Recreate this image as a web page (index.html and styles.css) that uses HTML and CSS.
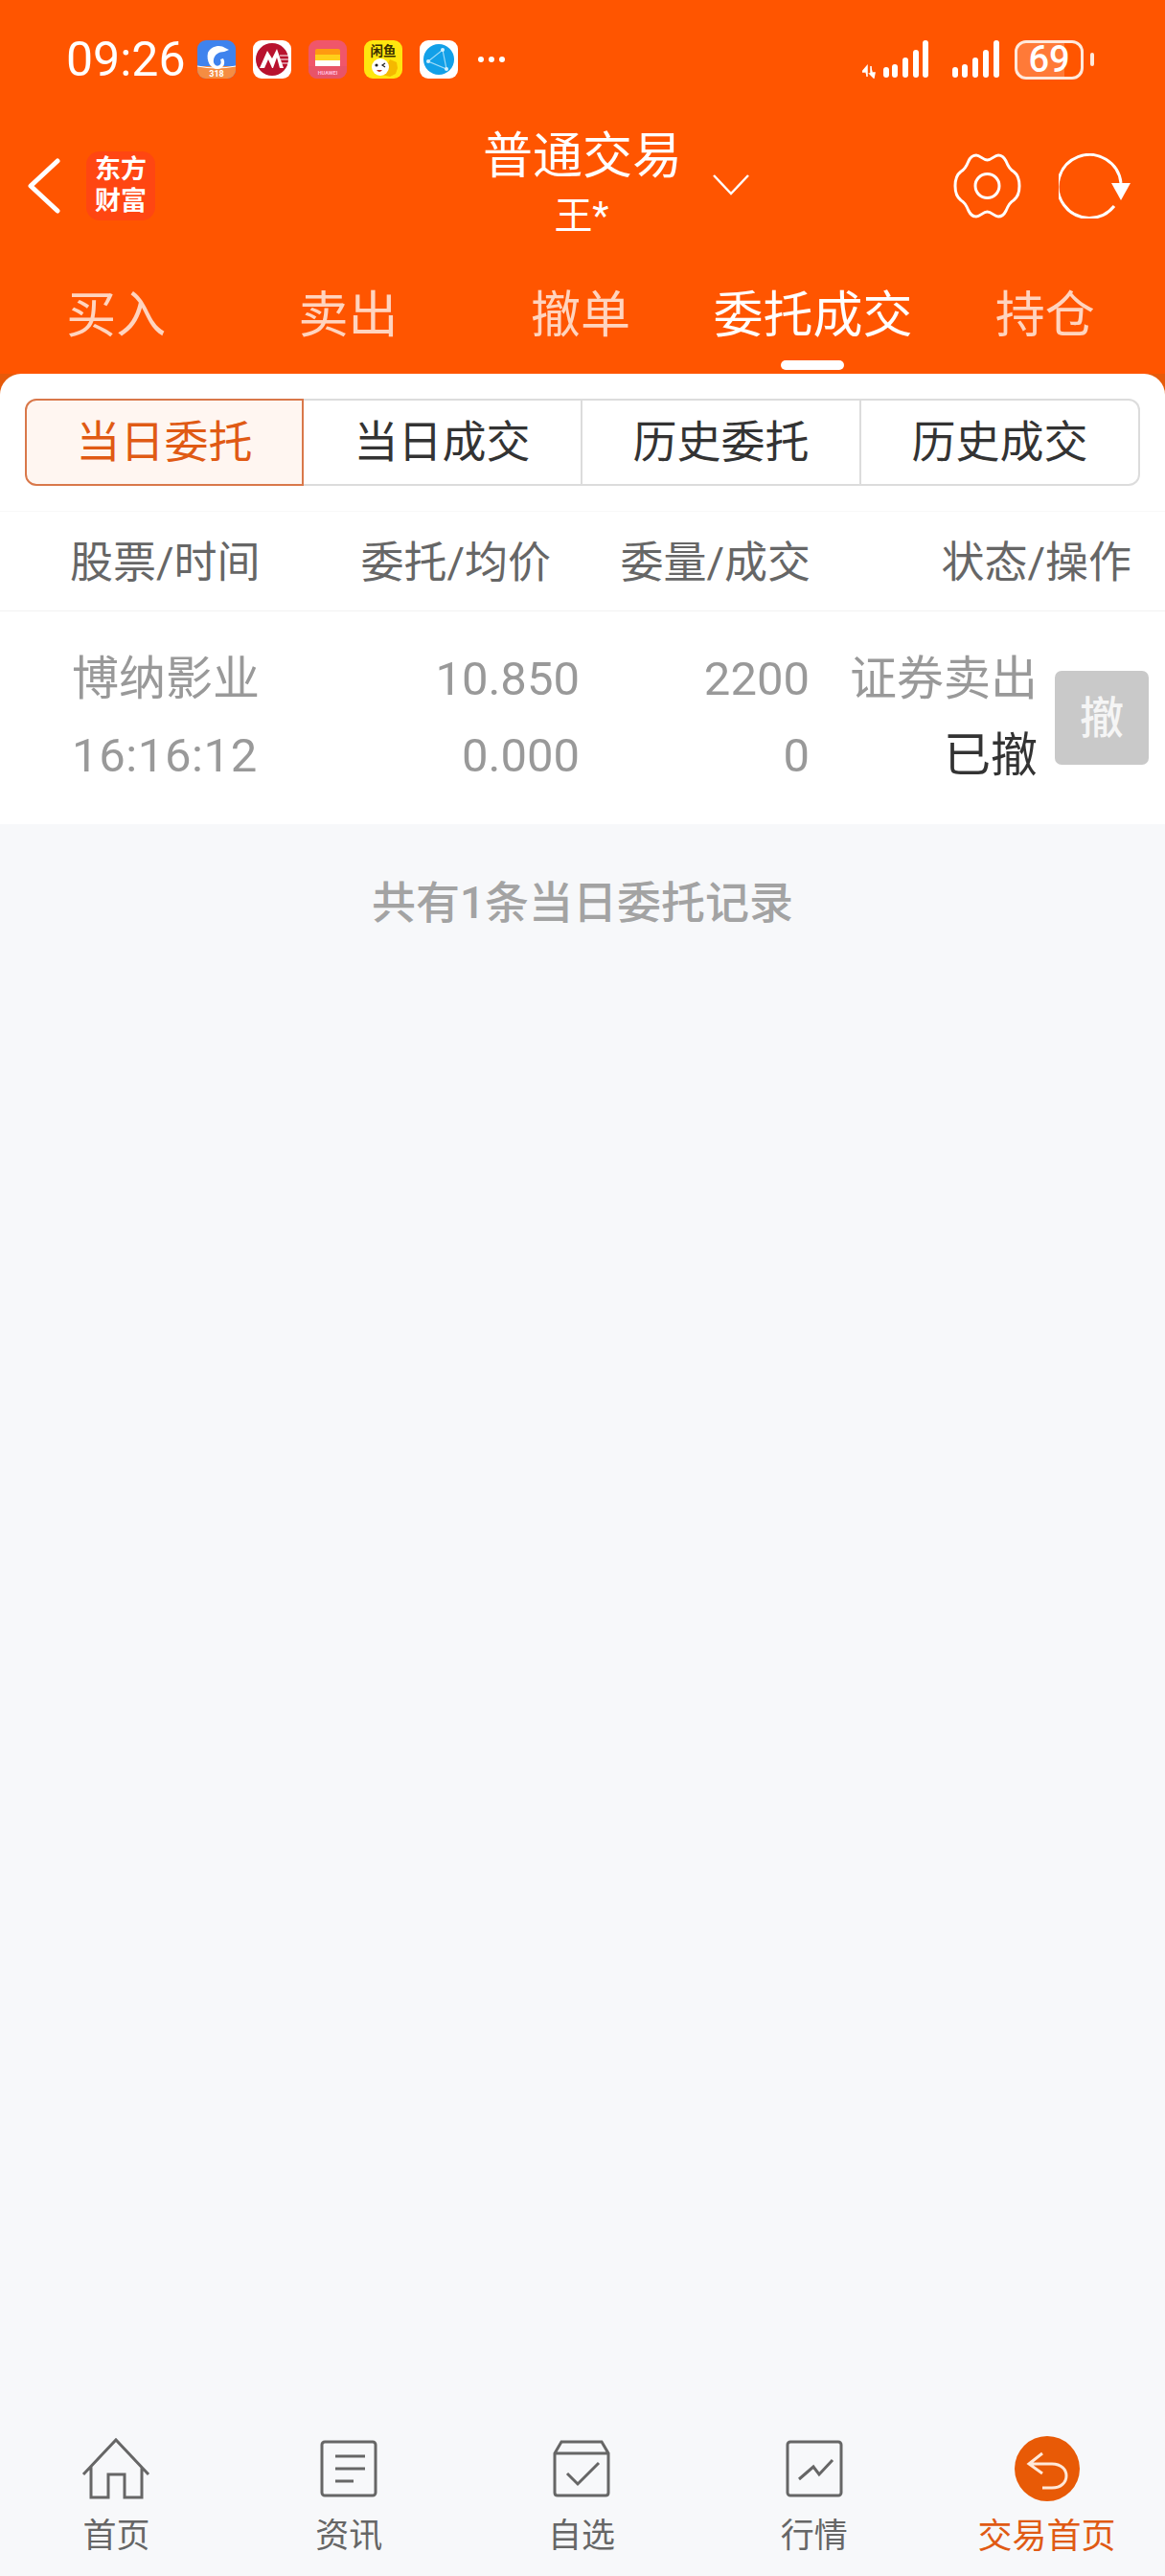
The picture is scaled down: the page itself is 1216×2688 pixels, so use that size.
FILE: index.html
```html
<!DOCTYPE html>
<html>
<head>
    <meta charset="utf-8">
    <link rel="stylesheet" href="styles.css">
</head>
<body>
<div class="page">
    <div class="header">
        <div class="statusBar">
            <span class="clock">09:26</span>
            <div class="appIcons">
                <svg class="appIcon" viewBox="0 0 40 40">
                    <defs><clipPath id="clip1"><rect width="40" height="40" rx="9"/></clipPath></defs>
                    <g clip-path="url(#clip1)">
                        <rect width="40" height="40" fill="#3f83ee"/>
                        <rect y="27" width="40" height="13" fill="#f58d42"/>
                        <path d="M0 27q20 4 40 0" fill="none" stroke="#fff" stroke-width="1"/>
                    </g>
                    <path d="M11 13C14 6 24 4 29 8L33 10L28 12C22 12 18 15 17 20C16 25 20 28 23 26C25 25 25 22 24 20L27 19C30 24 27 30 21 30C14 30 9 22 11 13Z" fill="#fff"/>
                    <text x="20" y="38" class="tinyText" font-size="9" fill="#fff">318</text>
                </svg>
                <svg class="appIcon" viewBox="0 0 40 40">
                    <rect width="40" height="40" rx="9" fill="#fff"/>
                    <circle cx="20" cy="20" r="17" fill="#b8122e"/>
                    <path d="M7 29L15 11L20 19L25 9L32 29Z" fill="#fff"/>
                    <path d="M12 29L16 20L20 29ZM21 29L25 18L28 29Z" fill="#b8122e"/>
                    <path d="M28 16h10M29 20h9M30 24h7" stroke="#fff" stroke-width="1.2"/>
                </svg>
                <svg class="appIcon" viewBox="0 0 40 40">
                    <defs><clipPath id="clip3"><rect width="40" height="40" rx="9"/></clipPath></defs>
                    <g clip-path="url(#clip3)">
                        <rect width="40" height="40" fill="#f0566a"/>
                        <rect y="27" width="40" height="13" fill="#e85468"/>
                    </g>
                    <rect x="7" y="9" width="26" height="8" rx="2" fill="#ff9a10"/>
                    <rect x="7" y="15" width="26" height="7" fill="#ffcf1a"/>
                    <rect x="7" y="21" width="26" height="6" fill="#fff"/>
                    <text x="20" y="36" class="tinyText" font-size="5.5" fill="#fbd">HUAWEI</text>
                </svg>
                <svg class="appIcon" viewBox="0 0 40 40">
                    <rect width="40" height="40" rx="9" fill="#ffe60f"/>
                    <text x="20" y="16" class="tinyText" font-size="13.5" fill="#3a3000">闲鱼</text>
                    <path d="M27 20l7 3 1 6-2 6-6 3-8-2z" fill="#f5b800"/>
                    <circle cx="17" cy="28" r="9" fill="#fff"/>
                    <circle cx="13" cy="26" r="1.6" fill="#222"/>
                    <path d="M22 24l-3 2 3 2" fill="none" stroke="#222" stroke-width="1.2"/>
                    <path d="M13 31q3 4 6 0z" fill="#c2331a"/>
                </svg>
                <svg class="appIcon" viewBox="0 0 40 40">
                    <rect width="40" height="40" rx="9" fill="#fff"/>
                    <circle cx="20" cy="20" r="16" fill="#12a0e8"/>
                    <path d="M9 22l15-12 4 20z" fill="none" stroke="#9fdcf8" stroke-width="1.2"/>
                    <circle cx="9" cy="22" r="2" fill="#d5f0fc"/>
                    <circle cx="24" cy="10" r="2" fill="#d5f0fc"/>
                    <circle cx="28" cy="30" r="2" fill="#d5f0fc"/>
                </svg>
            </div>
            <div class="dots"><i></i><i></i><i></i></div>
            <div class="statusRight">
                <svg class="signal" viewBox="0 0 145 40">
                    <path d="M5 38V27l-5 6h3M9 27v8h-1l4 4 1-5h-2" fill="#fff" stroke="#fff" stroke-width="1.5"/>
                    <rect x="22" y="28" width="6" height="11" rx="3" fill="#fff"/>
                    <rect x="31" y="25" width="6" height="14" rx="3" fill="#fff"/>
                    <rect x="42" y="18" width="6" height="21" rx="3" fill="#fff"/>
                    <rect x="53" y="10" width="6" height="29" rx="3" fill="#fff"/>
                    <rect x="63" y="0" width="6" height="39" rx="3" fill="#fff"/>
                    <rect x="94" y="28" width="6" height="11" rx="3" fill="#fff"/>
                    <rect x="104" y="25" width="6" height="14" rx="3" fill="#fff"/>
                    <rect x="115" y="18" width="6" height="21" rx="3" fill="#fff"/>
                    <rect x="126" y="10" width="6" height="29" rx="3" fill="#fff"/>
                    <rect x="137" y="0" width="6" height="39" rx="3" fill="#fff"/>
                </svg>
                <div class="battery">
                    <div class="batteryFill"></div>
                    <span class="batteryText">69</span>
                </div>
                <div class="batteryNub"></div>
            </div>
        </div>

        <div class="titleRow">
            <div class="titleLeft">
                <svg class="backIcon" viewBox="0 0 34 58"><polyline points="31,3 3,29 31,55" fill="none" stroke="#fff" stroke-width="5" stroke-linecap="round" stroke-linejoin="round"/></svg>
                <div class="logo">
                    <div>东方</div>
                    <div>财富</div>
                </div>
            </div>
            <div class="title">
                <div class="titleMain">普通交易</div>
                <div class="titleSub">王*</div>
            </div>
            <div class="titleRight">
                <svg class="chevron" viewBox="0 0 38 22"><polyline points="1,1 19,20 37,1" fill="none" stroke="#fff" stroke-width="2.5"/></svg>
                <svg class="gear" viewBox="0 0 71 70">
                    <path d="M35.5 8C40 8 43 3 47 3C51 3 53 5 55 9C57 14 59 18 63 20C67 23 69 28 69 35C69 42 67 47 63 50C59 52 57 56 55 61C53 65 51 67 47 67C43 67 40 62 35.5 62C31 62 28 67 24 67C20 67 18 65 16 61C14 56 12 52 8 50C4 47 2 42 2 35C2 28 4 23 8 20C12 18 14 14 16 9C18 5 20 3 24 3C28 3 31 8 35.5 8Z" fill="none" stroke="#fff" stroke-width="3"/>
                    <circle cx="35.5" cy="35" r="12.5" fill="none" stroke="#fff" stroke-width="3"/>
                </svg>
                <svg class="refresh" viewBox="0 0 75 68">
                    <path d="M58 55A33 33 0 1 1 65 31" fill="none" stroke="#fff" stroke-width="3"/>
                    <polygon points="55,31 75,31 65,49" fill="#fff"/>
                </svg>
            </div>
        </div>

        <div class="tabs">
            <div class="tab">买入</div>
            <div class="tab">卖出</div>
            <div class="tab">撤单</div>
            <div class="tab active">委托成交</div>
            <div class="tab">持仓</div>
        </div>
    </div>

    <div class="cardWrap">
        <div class="card">
            <div class="segment">
                <div class="segmentItem selected">当日委托</div>
                <div class="segmentItem">当日成交</div>
                <div class="segmentItem">历史委托</div>
                <div class="segmentItem">历史成交</div>
            </div>
            <div class="tableHead">
                <div>股票/时间</div>
                <div class="right">委托/均价</div>
                <div class="right">委量/成交</div>
                <div class="right">状态/操作</div>
            </div>
            <div class="orderRow">
                <div class="cell">
                    <div>博纳影业</div>
                    <div class="timeText">16:16:12</div>
                </div>
                <div class="cell right">
                    <div>10.850</div>
                    <div>0.000</div>
                </div>
                <div class="cell right">
                    <div>2200</div>
                    <div>0</div>
                </div>
                <div class="cell right">
                    <div>证券卖出</div>
                    <div class="dark">已撤</div>
                </div>
                <div class="cancelBtn">撤</div>
            </div>
        </div>
        <div class="note">共有1条当日委托记录</div>
    </div>

    <div class="bottomNav">
        <div class="navItem">
            <svg class="navIcon" viewBox="0 0 70 64">
                <path d="M1 38L35 2L69 38M9 30V62H27V38H44V62H62V30" fill="none" stroke="#666" stroke-width="3"/>
            </svg>
            <span>首页</span>
        </div>
        <div class="navItem">
            <svg class="navIcon" viewBox="0 0 70 64">
                <rect x="7" y="4" width="56" height="56" rx="3" fill="none" stroke="#666" stroke-width="3"/>
                <path d="M21 19H52M21 32H52M21 45H40" fill="none" stroke="#666" stroke-width="3"/>
            </svg>
            <span>资讯</span>
        </div>
        <div class="navItem">
            <svg class="navIcon" viewBox="0 0 70 64">
                <path d="M7 16L14 4H56L63 16V57Q63 60 60 60H10Q7 60 7 57ZM7 16H63" fill="none" stroke="#666" stroke-width="3"/>
                <polyline points="20,37 31,48 53,26" fill="none" stroke="#666" stroke-width="3"/>
            </svg>
            <span>自选</span>
        </div>
        <div class="navItem">
            <svg class="navIcon" viewBox="0 0 70 64">
                <rect x="7" y="4" width="56" height="56" rx="3" fill="none" stroke="#666" stroke-width="3"/>
                <polyline points="19,43 34,30 40,38 54,23" fill="none" stroke="#666" stroke-width="3"/>
            </svg>
            <span>行情</span>
        </div>
        <div class="navItem current">
            <svg class="navIcon" viewBox="0 0 70 64">
                <ellipse cx="35" cy="32" rx="34" ry="34" fill="#e85a06"/>
                <path d="M30 16L16 27L30 37M16 27H40C60 27 60 52 40 52H30" fill="none" stroke="#ffe8d8" stroke-width="3"/>
            </svg>
            <span>交易首页</span>
        </div>
    </div>
</div>
</body>
</html>
```

FILE: styles.css
```css
* {
    box-sizing: border-box;
}
body {
    margin: 0;
    font-family: Roboto, "Noto Sans CJK SC", sans-serif;
    color: #333;
}
.page {
    width: 1216px;
    height: 2688px;
    display: flex;
    flex-direction: column;
    background-color: #f7f8fa;
}
.right {
    text-align: right;
}

/* orange top part */
.header {
    height: 390px;
    background-color: #ff5500;
    color: white;
}
.statusBar {
    height: 124px;
    padding: 0 74px 0 69px;
    display: flex;
    align-items: center;
}
.clock {
    font-size: 50px;
    font-weight: 450;
    width: 137px;
}
.appIcons {
    display: flex;
    gap: 18px;
}
.appIcon {
    width: 40px;
    height: 40px;
    display: block;
}
.tinyText {
    font-family: Roboto, "Noto Sans CJK SC", sans-serif;
    font-weight: 700;
    text-anchor: middle;
}
.dots {
    display: flex;
    gap: 5px;
    margin-left: 21px;
}
.dots i {
    width: 6px;
    height: 6px;
    border-radius: 50%;
    background-color: #fff;
}
.statusRight {
    margin-left: auto;
    display: flex;
    align-items: center;
}
.signal {
    width: 145px;
    height: 40px;
    margin-right: 14px;
}
.battery {
    position: relative;
    width: 72px;
    height: 41px;
    border: 3px solid #ffe9dc;
    border-radius: 12px;
    overflow: hidden;
    display: flex;
    align-items: center;
    justify-content: center;
}
.batteryFill {
    position: absolute;
    left: 0;
    top: 0;
    bottom: 0;
    width: 49px;
    background-color: rgba(255, 255, 255, 0.22);
}
.batteryText {
    position: relative;
    font-size: 38px;
    font-weight: 500;
}
.batteryNub {
    width: 4px;
    height: 14px;
    border-radius: 2px;
    background-color: #ffe9dc;
    margin-left: 7px;
}

.titleRow {
    height: 140px;
    display: grid;
    grid-template-columns: 1fr auto 1fr;
}
.titleLeft {
    display: flex;
    align-items: center;
    padding-left: 29px;
}
.backIcon {
    width: 34px;
    height: 58px;
    margin-right: 27px;
}
.logo {
    width: 72px;
    height: 72px;
    border-radius: 14px;
    background-color: #ff4612;
    font-family: "Liberation Serif", "Noto Sans CJK SC", sans-serif;
    font-weight: 700;
    font-size: 27px;
    line-height: 33px;
    text-align: center;
    padding-top: 3px;
}
.title {
    text-align: center;
}
.titleMain {
    font-size: 52px;
    line-height: 72px;
    margin-top: 4px;
}
.titleSub {
    font-size: 40px;
    line-height: 44px;
    margin-top: 4px;
    padding-right: 2px;
}
.titleRight {
    display: flex;
    align-items: center;
    padding-right: 36px;
}
.chevron {
    width: 38px;
    height: 22px;
    margin-left: 32px;
    margin-top: -3px;
}
.gear {
    width: 71px;
    height: 70px;
    margin-left: auto;
}
.refresh {
    width: 75px;
    height: 68px;
    margin-left: 39px;
}

.tabs {
    height: 126px;
    display: grid;
    grid-template-columns: repeat(5, 1fr);
    padding-right: 4px;
}
.tab {
    position: relative;
    font-size: 52px;
    line-height: 132px;
    text-align: center;
    color: rgba(255, 255, 255, 0.75);
}
.tab.active {
    color: white;
}
.tab.active:after {
    content: "";
    position: absolute;
    left: 50%;
    bottom: 10px;
    width: 66px;
    height: 10px;
    margin-left: -33px;
    border-radius: 5px;
    background-color: white;
}

/* white card */
.cardWrap {
    flex: 1;
    background: linear-gradient(#e65a0a 30px, #f7f8fa 30px);
}
.card {
    background-color: white;
    border-radius: 22px 22px 0 0;
}
.segment {
    padding: 26px 26px;
    display: grid;
    grid-template-columns: repeat(4, 1fr);
}
.segmentItem {
    height: 91px;
    font-size: 46px;
    line-height: 87px;
    text-align: center;
    border: 2px solid #dcdcdc;
    border-left-width: 0;
    color: #333;
}
.segmentItem:last-child {
    border-radius: 0 12px 12px 0;
}
.segmentItem.selected {
    border: 2px solid #d9784a;
    border-radius: 12px 0 0 12px;
    background-color: #fff6f1;
    color: #e05a14;
}
.tableHead {
    height: 105px;
    padding: 0 36px 4px 73px;
    display: grid;
    grid-template-columns: 230px 272px 271px 335px;
    align-items: center;
    font-size: 45px;
    color: #666;
    border-top: 1px solid #f8f8f8;
    border-bottom: 1px solid #f2f2f2;
}
.orderRow {
    height: 222px;
    padding: 0 17px 0 75px;
    display: grid;
    grid-template-columns: 230px 300px 240px 238px 1fr;
    align-items: center;
    font-size: 49px;
    line-height: 80px;
    color: #999;
}
.timeText {
    letter-spacing: 0.6px;
}
.dark {
    color: #333;
}
.cancelBtn {
    width: 98px;
    height: 98px;
    border-radius: 7px;
    background-color: #c9c9c9;
    color: #f5f5f5;
    font-size: 46px;
    font-weight: 500;
    line-height: 98px;
    text-align: center;
    justify-self: end;
}
.note {
    padding-top: 52px;
    font-size: 46px;
    font-weight: 500;
    line-height: 60px;
    text-align: center;
    color: #a3a3a3;
}

/* bottom bar */
.bottomNav {
    height: 158px;
    background-color: #f7f8fa;
    display: grid;
    grid-template-columns: repeat(5, 1fr);
    padding-right: 2px;
}
.navItem {
    display: flex;
    flex-direction: column;
    align-items: center;
    font-size: 35px;
    line-height: 44px;
    color: #666;
}
.navIcon {
    width: 70px;
    height: 64px;
    margin-top: 14px;
    margin-bottom: 17px;
    overflow: visible;
}
.navItem.current {
    color: #e05a14;
    font-size: 36px;
}
```
